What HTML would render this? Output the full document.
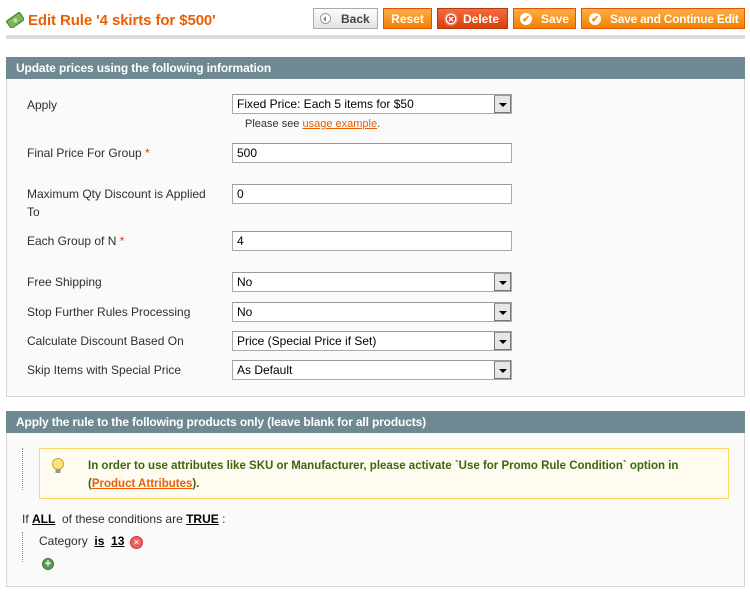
<!DOCTYPE html>
<html><head><style>
*{margin:0;padding:0;box-sizing:border-box}
body{width:750px;height:597px;background:#fff;font-family:"Liberation Sans",Arial,sans-serif;font-size:12px;color:#2f2f2f;position:relative;overflow:hidden}
.a{position:absolute}
.btn{position:absolute;top:8px;height:21px;border:1px solid #de5400;background:linear-gradient(#ffac47,#f18200);color:#fff;font-weight:bold;font-size:12px;line-height:20px;white-space:nowrap}
.hdr{position:absolute;left:6px;width:739px;height:22px;background:#6f8992;color:#fff;font-weight:bold;font-size:12px;line-height:22px;padding-left:10px;letter-spacing:-0.14px}
.fs{position:absolute;left:6px;width:739px;background:#fafafa;border:1px solid #d6d6d6;border-top:none}
.lbl{position:absolute;left:27px;color:#2f2f2f;font-size:12px;line-height:18px;margin-top:1px}
.inp{position:absolute;left:232px;width:280px;height:20px;border:1px solid #aaa;border-top-color:#999;background:#fff;padding-left:4px;line-height:18px;font-size:12px;color:#000}
.sel .dd{position:absolute;right:0;top:0;width:17px;height:18px;background:#e6e6e6;border:1px solid #777;border-top-color:#999}
.sel .dd:after{content:"";position:absolute;left:4px;top:7px;border:4px solid transparent;border-top:4px solid #000;border-bottom:none}
.req{color:#eb340a}
</style></head><body>
<svg class="a" style="left:6px;top:12px" width="18" height="16" viewBox="0 0 18 16"><g transform="rotate(-35 9 8)"><rect x="1" y="4" width="16" height="9" rx="1" fill="#7cb458" stroke="#3f7a2c"/><circle cx="9" cy="8.5" r="2.2" fill="#bfe0a5"/></g></svg>
<div class="a" style="left:28px;top:11px;font-size:15px;font-weight:bold;color:#eb5e00;line-height:20px;letter-spacing:-0.1px">Edit Rule '4 skirts for $500'</div>
<div class="btn" style="left:313px;width:65px;border-color:#aaa;background:linear-gradient(#fdfdfd,#e3e3e3);color:#444"><span style="position:absolute;left:6px;top:4px;width:11px;height:11px;border:1px solid #999;border-radius:50%;background:#fff"></span><span style="position:absolute;left:9px;top:7px;border:3px solid transparent;border-right:3px solid #888;border-left:none"></span><span style="position:absolute;left:27px">Back</span></div>
<div class="btn" style="left:383px;width:49px;text-align:center">Reset</div>
<div class="btn" style="left:437px;width:71px;background:linear-gradient(#f66a3d,#d7410c);border-color:#b33a0a"><svg style="position:absolute;left:6px;top:3px" width="14" height="14" viewBox="0 0 14 14"><circle cx="7" cy="7" r="6" fill="#fff" stroke="#f08a60" stroke-width="1.5"/><circle cx="7" cy="7" r="4" fill="#d8402a"/><path d="M5 5L9 9M9 5L5 9" stroke="#fff" stroke-width="1.5"/></svg><span style="position:absolute;left:25px">Delete</span></div>
<div class="btn" style="left:513px;width:63px"><span style="position:absolute;left:6px;top:4px;width:12px;height:12px;border-radius:50%;background:#fff;color:#f18200;font-size:9px;line-height:12px;text-align:center">✔</span><span style="position:absolute;left:27px">Save</span></div>
<div class="btn" style="left:581px;width:164px"><span style="position:absolute;left:7px;top:4px;width:12px;height:12px;border-radius:50%;background:#fff;color:#f18200;font-size:9px;line-height:12px;text-align:center">✔</span><span style="position:absolute;left:28px;letter-spacing:-0.25px">Save and Continue Edit</span></div>
<div class="a" style="left:6px;top:35px;width:739px;height:4px;background:#dcdcdc"></div>

<div class="hdr" style="top:57px">Update prices using the following information</div>
<div class="fs" style="top:79px;height:318px"></div>
<div class="lbl" style="top:95px">Apply</div>
<div class="inp sel" style="top:94px">Fixed Price: Each 5 items for $50<span class="dd"></span></div>
<div class="a" style="left:245px;top:118px;font-size:11px;color:#333">Please see <span style="color:#eb5e00;text-decoration:underline">usage example</span>.</div>
<div class="lbl" style="top:143px">Final Price For Group <span class="req">*</span></div>
<div class="inp" style="top:143px">500</div>
<div class="lbl" style="top:184px">Maximum Qty Discount is Applied<br>To</div>
<div class="inp" style="top:184px">0</div>
<div class="lbl" style="top:231px">Each Group of N <span class="req">*</span></div>
<div class="inp" style="top:231px">4</div>
<div class="lbl" style="top:272px">Free Shipping</div>
<div class="inp sel" style="top:272px">No<span class="dd"></span></div>
<div class="lbl" style="top:302px">Stop Further Rules Processing</div>
<div class="inp sel" style="top:302px">No<span class="dd"></span></div>
<div class="lbl" style="top:331px">Calculate Discount Based On</div>
<div class="inp sel" style="top:331px">Price (Special Price if Set)<span class="dd"></span></div>
<div class="lbl" style="top:360px">Skip Items with Special Price</div>
<div class="inp sel" style="top:360px">As Default<span class="dd"></span></div>

<div class="hdr" style="top:411px;letter-spacing:-0.15px">Apply the rule to the following products only (leave blank for all products)</div>
<div class="fs" style="top:433px;height:154px"></div>
<div class="a" style="left:22px;top:448px;height:42px;border-left:1px dotted #888"></div>
<div class="a" style="left:39px;top:448px;width:690px;height:51px;background:#fffbf0;border:1px solid #ffd967"></div>
<svg class="a" style="left:51px;top:458px" width="14" height="16" viewBox="0 0 14 16"><circle cx="7" cy="6" r="5.5" fill="#ffe37a" stroke="#c9a63a"/><rect x="4.5" y="11" width="5" height="4" fill="#999"/></svg>
<div class="a" style="left:88px;top:457px;font-weight:bold;color:#3d6611;font-size:11.5px;line-height:18px">In order to use attributes like SKU or Manufacturer, please activate `Use for Promo Rule Condition` option in<br>(<span style="color:#eb5e00;text-decoration:underline">Product Attributes</span>).</div>
<div class="a" style="left:22px;top:511px;line-height:16px">If <b style="text-decoration:underline;color:#000">ALL</b>&nbsp; of these conditions are <b style="text-decoration:underline;color:#000">TRUE</b> :</div>
<div class="a" style="left:22px;top:532px;height:30px;border-left:1px dotted #888"></div>
<div class="a" style="left:39px;top:533px;line-height:16px">Category&nbsp; <b style="text-decoration:underline;color:#000">is</b>&nbsp; <b style="text-decoration:underline;color:#000">13</b></div>
<div class="a" style="left:130px;top:536px;width:13px;height:13px;border-radius:50%;background:#f06060;border:1px solid #c33;color:#fff;font-size:8px;line-height:11px;text-align:center">✕</div>
<div class="a" style="left:42px;top:558px;width:12px;height:12px;border-radius:50%;background:#5a9a58;border:1px solid #3d7a3b;color:#fff;font-size:11px;font-weight:bold;line-height:10px;text-align:center">+</div>
</body></html>
